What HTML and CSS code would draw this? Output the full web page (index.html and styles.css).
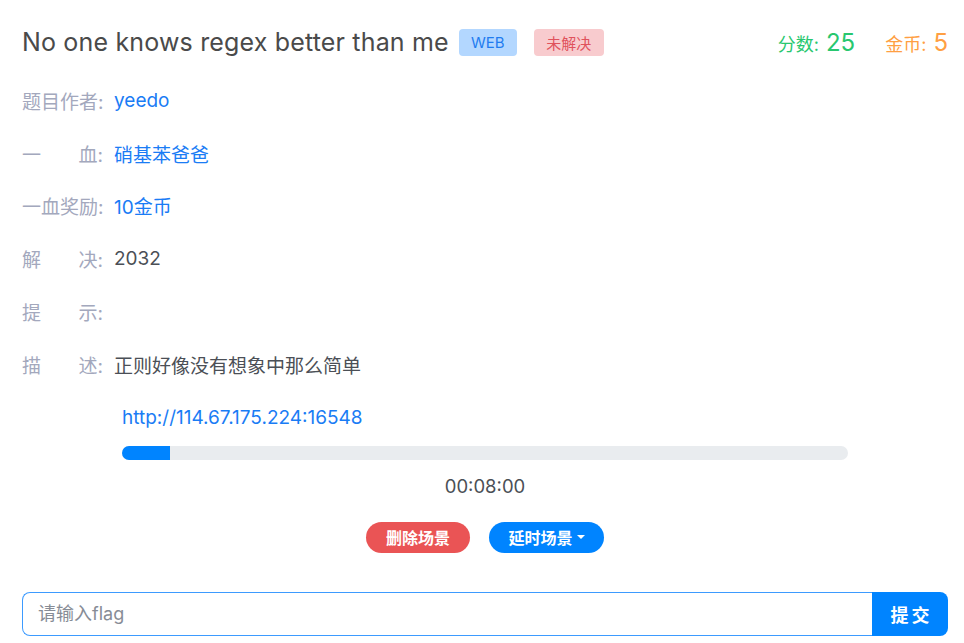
FILE: index.html
```html
<!DOCTYPE html>
<html lang="zh">
<head>
<meta charset="utf-8">
<title>Challenge</title>
<link rel="stylesheet" href="styles.css">
</head>
<body>
<div class="page">
  <div class="header">
    <h1 class="title">No one knows regex better than me</h1>
    <span class="badge badge-web">WEB</span>
    <span class="badge badge-unsolved">未解决</span>
    <div class="stats">
      <span class="stat stat-score">分数: <b>25</b></span>
      <span class="stat stat-coin">金币: <b>5</b></span>
    </div>
  </div>
  <div class="info">
    <div class="row"><span class="label"><span>题目作者:</span></span><span class="value link">yeedo</span></div>
    <div class="row"><span class="label"><span>一</span><span>血:</span></span><span class="value link">硝基苯爸爸</span></div>
    <div class="row"><span class="label"><span>一血奖励:</span></span><span class="value link">10金币</span></div>
    <div class="row"><span class="label"><span>解</span><span>决:</span></span><span class="value">2032</span></div>
    <div class="row"><span class="label"><span>提</span><span>示:</span></span><span class="value"></span></div>
    <div class="row"><span class="label"><span>描</span><span>述:</span></span><span class="value">正则好像没有想象中那么简单</span></div>
  </div>
  <div class="scene">
    <div class="url">http://114.67.175.224:16548</div>
    <div class="progress"><div class="progress-fill" style="width:48px"></div></div>
    <div class="time">00:08:00</div>
    <div class="actions">
      <button class="btn btn-red">删除场景</button>
      <button class="btn btn-blue">延时场景<span class="caret"></span></button>
    </div>
  </div>
  <div class="flag-form">
    <input class="flag-input" type="text" placeholder="请输入flag">
    <button class="submit">提交</button>
  </div>
</div>
</body>
</html>
```

FILE: styles.css
```css
html, body {
  margin: 0;
  padding: 0;
  background: #fff;
}
body {
  font-family: Inter, "Noto Sans CJK SC", sans-serif;
  color: #4b4f56;
}
.page {
  width: 926px;
  padding: 22px 16px 0 22px;
}
.header {
  display: flex;
  align-items: center;
  height: 40px;
}
.title {
  margin: 0;
  font-size: 25px;
  font-weight: 400;
  letter-spacing: 0.17px;
  color: #4a4a4a;
  line-height: 30px;
}
.badge {
  display: inline-flex;
  align-items: center;
  justify-content: center;
  height: 27px;
  border-radius: 4px;
  font-size: 15px;
}
.badge-web {
  margin-left: 10px;
  width: 58px;
  background: #b3d7ff;
  color: #1f7cf0;
}
.badge-unsolved {
  margin-left: 17px;
  width: 70px;
  background: #f8cbce;
  color: #e0525c;
}
.stats {
  margin-left: auto;
  display: flex;
  gap: 30px;
  align-items: baseline;
}
.stat {
  font-size: 18px;
}
.stat b {
  font-weight: 400;
  font-size: 24px;
  margin-left: 2px;
}
.stat-score { color: #28c76f; }
.stat-coin { color: #ff9f43; }

.info {
  margin-top: 12px;
}
.row {
  display: flex;
  align-items: center;
  height: 52.8px;
  font-size: 19px;
}
.label {
  width: 81px;
  margin-right: 11px;
  color: #a3a8bd;
  display: flex;
  justify-content: space-between;
  white-space: nowrap;
}
.value {
  color: #4b4f56;
}
.link {
  color: #1a7cf5;
}

.scene {
  margin: 0 100px;
}
.url {
  height: 52.8px;
  display: flex;
  align-items: center;
  font-size: 19px;
  color: #1a7cf5;
}
.progress {
  margin-top: 2px;
  height: 14px;
  background: #e9ecef;
  border-radius: 7px;
  overflow: hidden;
}
.progress-fill {
  height: 100%;
  background: #0084ff;
}
.time {
  margin-top: 13px;
  text-align: center;
  font-size: 18.5px;
  line-height: 27px;
  color: #4b4f56;
}
.actions {
  margin-top: 22px;
  display: flex;
  justify-content: center;
  gap: 19px;
}
.btn {
  height: 31px;
  border: none;
  border-radius: 16px;
  color: #fff;
  font-family: Inter, "Noto Sans CJK SC", sans-serif;
  font-size: 16px;
  font-weight: 700;
  display: inline-flex;
  align-items: center;
  justify-content: center;
  padding: 0;
}
.btn-red {
  width: 104px;
  background: #ea5455;
}
.btn-blue {
  width: 115px;
  background: #0084ff;
}
.caret {
  display: inline-block;
  margin-left: 4px;
  width: 0;
  height: 0;
  border-left: 4px solid transparent;
  border-right: 4px solid transparent;
  border-top: 4px solid #fff;
}

.flag-form {
  margin-top: 39px;
  display: flex;
  height: 44px;
}
.flag-input {
  flex: 1;
  box-sizing: border-box;
  height: 44px;
  margin: 0;
  border: 1px solid #3d9bff;
  border-right: none;
  border-radius: 8px 0 0 8px;
  padding: 0 15px;
  font-family: Inter, "Noto Sans CJK SC", sans-serif;
  font-size: 18px;
  color: #4b4f56;
  outline: none;
}
.flag-input::placeholder {
  color: #878c96;
}
.submit {
  width: 76px;
  height: 44px;
  border: none;
  margin: 0;
  border-radius: 0 8px 8px 0;
  background: #0084ff;
  color: #fff;
  font-family: Inter, "Noto Sans CJK SC", sans-serif;
  font-size: 18px;
  font-weight: 700;
  letter-spacing: 3px;
  padding: 0 0 0 3px;
}
```
